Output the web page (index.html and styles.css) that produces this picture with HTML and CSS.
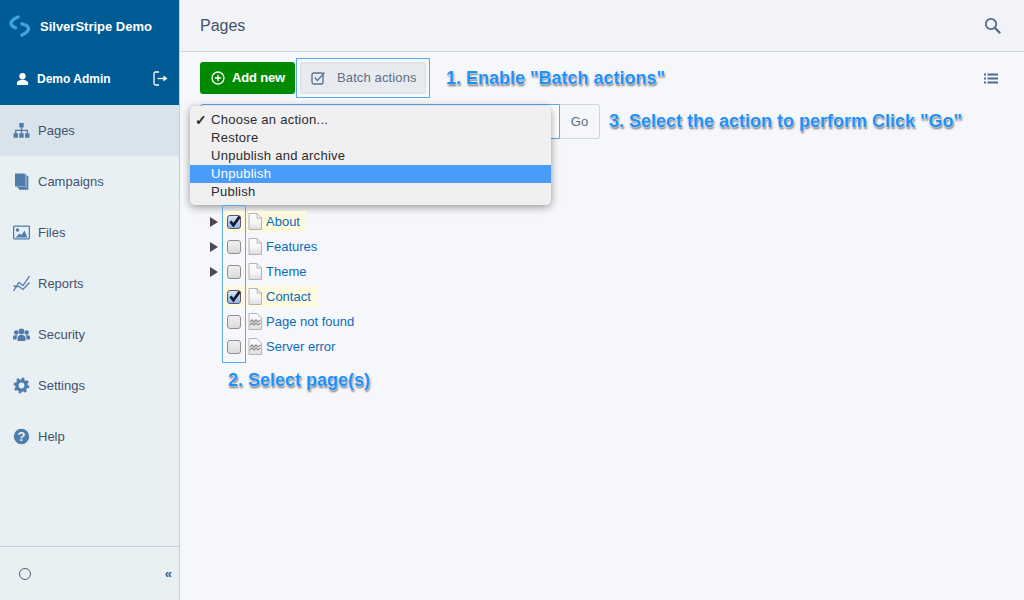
FILE: index.html
```html
<!DOCTYPE html>
<html lang="en">
<head>
<meta charset="utf-8">
<title>Pages - SilverStripe Demo</title>
<link rel="stylesheet" href="styles.css">
</head>
<body>
<svg class="defs" aria-hidden="true"><defs><linearGradient id="pg" x1="0" y1="0" x2="0" y2="1"><stop offset="0" stop-color="#fbfbfb"/><stop offset=".55" stop-color="#f6f6f6"/><stop offset="1" stop-color="#dcdcdc"/></linearGradient></defs></svg>
<div class="app">
  <aside class="sidebar">
    <div class="brand">
      <svg class="logo" viewBox="0 0 22 22"><path d="M9 2 Q2 5 2 8.500 Q2 11 6.500 12.800" /><path d="M13 8.800 Q19.500 10.500 19.500 13.500 Q19.500 17 13 20" /></svg>
      <span class="brand-name">SilverStripe Demo</span>
    </div>
    <div class="user">
      <svg class="user-ico" viewBox="0 0 14 14"><circle cx="7" cy="4" r="3.400"/><path d="M1 13.500 V11 Q1 9 4 8.400 L7 7.500 L10 8.400 Q13 9 13 11 V13.500Z"/></svg>
      <span class="user-name">Demo Admin</span>
      <svg class="logout" viewBox="0 0 15 15"><path class="ln" d="M6 1 H2.500 Q1 1 1 2.500 V12.500 Q1 14 2.500 14 H6"/><path class="ln" d="M4.500 7.500 H12"/><path class="fl" d="M10.500 4.500 L14.500 7.500 L10.500 10.500Z"/></svg>
    </div>
    <nav class="nav">
      <a class="nav-item active">
        <svg class="nav-ico" viewBox="0 0 17 17"><path class="fl" d="M6.300 1h4.400v4.400H6.300zM0.500 11.300h4.400v4.400H.5zM6.300 11.300h4.400v4.400H6.300zM12.100 11.300h4.400v4.400h-4.400z"/><path class="st" d="M8.500 5v6.500M2.700 11.500V8.300h11.600v3.200"/></svg>
        Pages
      </a>
      <a class="nav-item">
        <svg class="nav-ico" viewBox="0 0 17 17"><path class="fl" d="M2 0.500h10v13H2z"/><path class="st" d="M13 1.500v13H4.500M14.700 3v13H6"/></svg>
        Campaigns
      </a>
      <a class="nav-item">
        <svg class="nav-ico" viewBox="0 0 17 17"><rect class="st" x=".6" y="2.100" width="15.800" height="12.800" rx="1"/><circle class="fl" cx="4.500" cy="6" r="1.700"/><path class="fl" d="M2.500 13.500 L6.500 9.500 L8.500 11 L11.500 6.500 L14.500 13.500Z"/></svg>
        Files
      </a>
      <a class="nav-item">
        <svg class="nav-ico" viewBox="0 0 17 17"><path class="st" d="M0.500 16 L6 7.500 L10 10.500 L16.500 1M0.500 11 L6 11.500 L10 14.500 L16.500 7.500"/></svg>
        Reports
      </a>
      <a class="nav-item">
        <svg class="nav-ico" viewBox="0 0 17 17"><circle class="fl" cx="8.500" cy="5.500" r="2.900"/><circle class="fl" cx="3.300" cy="6.500" r="2.300"/><circle class="fl" cx="13.700" cy="6.500" r="2.300"/><path class="fl" d="M4.500 15 V12 Q4.500 9.500 7 9 H10 Q12.500 9.500 12.500 12 V15Z"/><path class="fl" d="M0 13.500 V11 Q0 9.300 2 9.200 H4.400 Q3.500 10.500 3.500 13.500ZM17 13.500 V11 Q17 9.300 15 9.200 H12.600 Q13.500 10.500 13.500 13.500Z"/></svg>
        Security
      </a>
      <a class="nav-item">
        <svg class="nav-ico" viewBox="0 0 17 17"><circle class="gear" cx="8.500" cy="8.500" r="4.600"/><circle class="teeth" cx="8.500" cy="8.500" r="6.700"/></svg>
        Settings
      </a>
      <a class="nav-item">
        <svg class="nav-ico" viewBox="0 0 17 17"><circle class="fl" cx="8.500" cy="8.500" r="7.700"/><text class="help-mark" x="8.500" y="13">?</text></svg>
        Help
      </a>
    </nav>
    <div class="foot">
      <span class="ring"></span>
      <span class="collapse">«</span>
    </div>
  </aside>

  <main class="main">
    <header class="topbar">
      <h1 class="title">Pages</h1>
      <svg class="search" viewBox="0 0 17 17"><circle cx="7" cy="7" r="5.200"/><path d="M11 11 L15.500 15.500"/></svg>
    </header>

    <div class="content">
      <div class="toolbar">
        <button class="add"><svg class="plus" viewBox="0 0 14 14"><circle cx="7" cy="7" r="6"/><path d="M7 3.800v6.400M3.800 7h6.400"/></svg>Add new</button>
        <div class="hint-box">
          <button class="batch"><svg class="batch-ico" viewBox="0 0 15 14"><rect x="1" y="2" width="11" height="11" rx="2"/><path d="M3.800 6.500 L6.500 9.500 L13.500 1.500"/></svg>Batch actions</button>
        </div>
        <span class="note note-1">1. Enable "Batch actions"</span>
        <svg class="list-ico" viewBox="0 0 14 11"><path d="M0 0.500h2v2H0zM0 4.500h2v2H0zM0 8.500h2v2H0zM3.500 0.500H14v2H3.500zM3.500 4.500H14v2H3.500zM3.500 8.500H14v2H3.500z"/></svg>
      </div>

      <div class="batch-row">
        <div class="select-wrap">
          <div class="select"></div>
          <button class="go">Go</button>
          <ul class="menu">
            <li class="menu-item"><span class="tick">✓</span>Choose an action...</li>
            <li class="menu-item">Restore</li>
            <li class="menu-item">Unpublish and archive</li>
            <li class="menu-item on">Unpublish</li>
            <li class="menu-item">Publish</li>
          </ul>
        </div>
        <span class="note note-3">3. Select the action to perform Click "Go"</span>
      </div>

      <div class="tree">
        <div class="col-hint"></div>
        <div class="row">
          <span class="arrow"></span>
          <span class="check-cell sel"><span class="box checked"><svg viewBox="0 0 14 14"><path d="M3.200 6.800 L6 10.500 L11.800 2.500"/></svg></span></span>
          <span class="label sel"><svg class="page" viewBox="0 0 14 17"><path d="M1 .5H9L13.500 5V16.500H1Z"/><path d="M9 .5V5H13.500"/></svg><a class="link">About</a></span>
        </div>
        <div class="row">
          <span class="arrow"></span>
          <span class="check-cell"><span class="box"></span></span>
          <span class="label"><svg class="page" viewBox="0 0 14 17"><path d="M1 .5H9L13.500 5V16.500H1Z"/><path d="M9 .5V5H13.500"/></svg><a class="link">Features</a></span>
        </div>
        <div class="row">
          <span class="arrow"></span>
          <span class="check-cell"><span class="box"></span></span>
          <span class="label"><svg class="page" viewBox="0 0 14 17"><path d="M1 .5H9L13.500 5V16.500H1Z"/><path d="M9 .5V5H13.500"/></svg><a class="link">Theme</a></span>
        </div>
        <div class="row">
          <span class="arrow none"></span>
          <span class="check-cell sel"><span class="box checked"><svg viewBox="0 0 14 14"><path d="M3.200 6.800 L6 10.500 L11.800 2.500"/></svg></span></span>
          <span class="label sel"><svg class="page" viewBox="0 0 14 17"><path d="M1 .5H9L13.500 5V16.500H1Z"/><path d="M9 .5V5H13.500"/></svg><a class="link">Contact</a></span>
        </div>
        <div class="row">
          <span class="arrow none"></span>
          <span class="check-cell"><span class="box"></span></span>
          <span class="label"><svg class="page err" viewBox="0 0 14 17"><path d="M1 .5H9L13.500 5V16.500H1Z"/><path d="M2 9 L4 7 L6 9 L8 7 L10 9 L12.500 7M2 12 L4 10 L6 12 L8 10 L10 12 L12.500 10"/></svg><a class="link">Page not found</a></span>
        </div>
        <div class="row">
          <span class="arrow none"></span>
          <span class="check-cell"><span class="box"></span></span>
          <span class="label"><svg class="page err" viewBox="0 0 14 17"><path d="M1 .5H9L13.500 5V16.500H1Z"/><path d="M2 9 L4 7 L6 9 L8 7 L10 9 L12.500 7M2 12 L4 10 L6 12 L8 10 L10 12 L12.500 10"/></svg><a class="link">Server error</a></span>
        </div>
      </div>
      <div class="note note-2">2. Select page(s)</div>
    </div>
  </main>
</div>
</body>
</html>
```
FILE: styles.css
```css
* { box-sizing: border-box; }
html, body { margin: 0; height: 100%; }
body { font-family: "Liberation Sans", Arial, sans-serif; font-size: 13px; color: #43536d; background: #f6f7fa; overflow: hidden; }
.defs { position: absolute; width: 0; height: 0; }
.app { display: flex; height: 600px; }

.sidebar { width: 180px; flex: none; display: flex; flex-direction: column; background: #e9f0f4; border-right: 1px solid #c3cfdb; }
.brand { height: 52px; background: #005b94; display: flex; align-items: center; padding-left: 9px; }
.logo { width: 22px; height: 22px; margin-right: 9px; fill: none; stroke: #3fa3e2; stroke-width: 3.400; stroke-linecap: round; }
.brand-name { color: #fff; font-weight: 700; font-size: 13px; }
.user { height: 53px; background: #005b94; display: flex; align-items: center; padding: 0 11px 0 16px; color: #fff; }
.user-ico { width: 13px; height: 14px; margin-right: 8px; fill: #fff; }
.user-name { flex: 1; font-weight: 700; font-size: 12px; }
.logout { width: 15px; height: 15px; }
.logout .ln { fill: none; stroke: #fff; stroke-width: 1.300; }
.logout .fl { fill: #fff; }

.nav { flex: 1; display: flex; flex-direction: column; }
.nav-item { height: 51px; display: flex; align-items: center; padding-left: 13px; gap: 8px; color: #43536d; font-size: 13px; }
.nav-item.active { background: #d8e3eb; }
.nav-ico { width: 17px; height: 17px; flex: none; }
.nav-ico .fl { fill: #4f7cab; }
.nav-ico .st { fill: none; stroke: #4f7cab; stroke-width: 1.300; }
.nav-ico .gear { fill: none; stroke: #4f7cab; stroke-width: 3.400; }
.nav-ico .teeth { fill: none; stroke: #4f7cab; stroke-width: 2.400; stroke-dasharray: 2.630 2.630; }
.help-mark { fill: #e9f0f4; font-size: 13px; font-weight: 700; text-anchor: middle; font-family: "Liberation Sans", Arial, sans-serif; }

.foot { height: 54px; flex: none; border-top: 1px solid #c3cfdb; display: flex; align-items: center; justify-content: space-between; padding: 0 7px 0 19px; }
.ring { width: 12px; height: 12px; border: 1.500px solid #5a5a6e; border-radius: 50%; }
.collapse { color: #2b5f9a; font-size: 13px; font-weight: 700; }

.main { flex: 1; min-width: 0; display: flex; flex-direction: column; }
.topbar { height: 52px; flex: none; background: #f1f3f7; border-bottom: 1px solid #d3d7de; display: flex; align-items: center; justify-content: space-between; padding: 0 23px 0 20px; }
.title { margin: 0; font-size: 16px; font-weight: 400; color: #43536d; }
.search { width: 17px; height: 17px; fill: none; stroke: #4d6b8c; stroke-width: 1.800; }
.search path { stroke-width: 2.400; stroke-linecap: round; }

.content { flex: 1; padding: 6px 26px 0 20px; }
.toolbar { display: flex; align-items: center; height: 40px; }
.add { width: 95px; height: 32px; border: 0; border-radius: 3px; background: #008a00; color: #fff; font: 700 13px "Liberation Sans", Arial, sans-serif; letter-spacing: -0.2px; display: flex; align-items: center; justify-content: center; gap: 7px; padding: 0 0 2px 1px; margin-right: 1px; }
.plus { width: 14px; height: 14px; margin-top: 2px; fill: none; stroke: #fff; stroke-width: 1.300; }
.hint-box { width: 134px; height: 40px; border: 1px solid #5aa9ec; padding: 3px; display: flex; }
.batch { flex: 1; border: 2px solid #dfe5ea; border-radius: 2px; background: #e7ebef; color: #5b6f85; font: 13px "Liberation Sans", Arial, sans-serif; letter-spacing: .12px; display: flex; align-items: center; gap: 11px; padding: 0 0 2px 9px; }
.batch-ico { width: 15px; height: 14px; margin-top: 1px; fill: none; stroke: #5c7590; stroke-width: 1.400; }
.list-ico { width: 14px; height: 11px; margin-left: auto; fill: #4d6b8c; }

.note { color: #1f90fa; font-weight: 700; font-size: 18px; text-shadow: 0 0 1px #fff, 0 0 2px #fff, 1px 2px 2px rgba(0, 0, 0, .55); white-space: nowrap; }
.note-1 { margin-left: 16px; }
.note-3 { margin-left: 9px; }
.note-2 { margin: 11px 0 0 28px; }

.batch-row { display: flex; align-items: center; margin-top: 6px; height: 35px; }
.select-wrap { position: relative; display: flex; width: 400px; height: 35px; }
.select { width: 360px; border: 1px solid #5aa9ec; border-radius: 3px 0 0 3px; background: #fff; }
.go { width: 40px; border: 1px solid #ced5e1; border-left: 0; border-radius: 0 3px 3px 0; background: #f6f7fa; color: #5b6f85; font: 13px "Liberation Sans", Arial, sans-serif; padding: 0; }
.menu { position: absolute; left: -10px; top: 2px; width: 361px; height: 99px; margin: 0; padding: 5px 0 0; list-style: none; background: #f0f0f0; border-radius: 5px; box-shadow: 0 2px 8px rgba(0, 0, 0, .4); }
.menu-item { position: relative; height: 18px; line-height: 18px; padding-left: 21px; font-size: 13px; letter-spacing: .27px; color: #2c2c2c; }
.menu-item.on { background: #4a9cfb; color: #fff; }
.tick { position: absolute; left: 5px; font-size: 14px; font-weight: 700; letter-spacing: 0; }

.tree { position: relative; margin-top: 70px; padding-left: 10px; }
.col-hint { position: absolute; left: 22px; top: -4px; width: 24px; height: 158px; border: 1px solid #5aa9ec; pointer-events: none; }
.row { display: flex; align-items: center; height: 25px; }
.arrow { width: 8px; height: 10px; flex: none; margin-right: 4px; border-style: solid; border-width: 5px 0 5px 8px; border-color: transparent transparent transparent #4f4458; }
.arrow.none { border-color: transparent; }
.check-cell { width: 24px; height: 21px; display: flex; align-items: center; justify-content: center; margin-right: 2px; }
.sel { background: #fdf9dd; }
.box { width: 14px; height: 14px; border: 1px solid #8f8f8f; border-radius: 3px; background: linear-gradient(#f0f0f0, #dadada); display: block; }
.box.checked { background: linear-gradient(#d9e6fb, #8fb7ef); border-color: #5d5568; position: relative; }
.box svg { position: absolute; left: -1px; top: -2px; width: 15px; height: 15px; fill: none; stroke: #1c1c2c; stroke-width: 2.600; }
.label { display: flex; align-items: center; height: 21px; padding-right: 6px; }
.page { width: 14px; height: 17px; margin-right: 4px; fill: url(#pg); stroke: #b5b5b5; stroke-width: 1; }
.page path + path { fill: none; }
.page.err path + path { stroke: #8f8f8f; stroke-width: 1.300; }
.link { color: #0b6bb8; font-size: 13px; }
```
